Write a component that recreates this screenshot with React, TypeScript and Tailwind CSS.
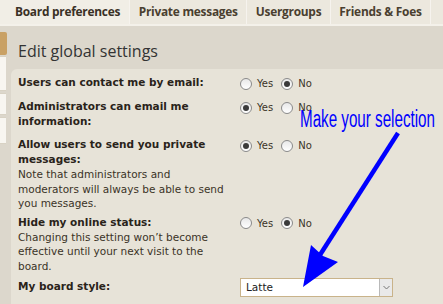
import React from "react";

const tabs = ["Board preferences", "Private messages", "Usergroups", "Friends & Foes"];

function Radio({ checked }: { checked?: boolean }) {
  return (
    <span className="relative inline-flex h-[12px] w-[12px] items-center justify-center rounded-full border border-[#8a8a8a] bg-gradient-to-b from-[#e8e8e8] to-white">
      {checked && <span className="h-[6px] w-[6px] rounded-full bg-[#3a3a3a]" />}
    </span>
  );
}

function YesNo({ yes }: { yes: boolean }) {
  return (
    <div className="flex items-center text-[10px] text-[#3b3327]">
      <Radio checked={yes} />
      <span className="ml-[5px]">Yes</span>
      <span className="ml-[8px]" />
      <Radio checked={!yes} />
      <span className="ml-[5px]">No</span>
    </div>
  );
}

function Row({ label, note, pad = "py-[4px]", children }: { label: React.ReactNode; note?: React.ReactNode; pad?: string; children?: React.ReactNode }) {
  return (
    <div className={`flex ${pad}`}>
      <div className="w-[222px] shrink-0">
        <div className="font-bold leading-[15px] text-[#2a231a]">{label}</div>
        {note && <div className="leading-[14.5px] text-[#3b3327]">{note}</div>}
      </div>
      <div className="pt-[1px]">{children}</div>
    </div>
  );
}

export default function App() {
  return (
    <div className="relative h-[304px] w-[443px] overflow-hidden bg-[#dcd7cc] font-['DejaVu_Sans',sans-serif]">
      {/* tab bar */}
      <div className="flex h-[26px] border-b-2 border-[#f4f1ea] bg-[#ece8de] font-['Open_Sans',sans-serif] text-[11.9px] font-bold tracking-[-0.25px] whitespace-nowrap text-[#4a3f30]">
        {tabs.map((t, i) => (
          <div
            key={t}
            className={`flex shrink-0 items-center border-r border-[#f6f3ee] ${i === 0 ? "bg-[#f1eee6] pl-[15px] pr-[9px] text-[#3a3126]" : "px-[8.5px]"}`}
          >
            {t}
          </div>
        ))}
        <div className="flex-1" />
      </div>

      <div className="flex">
        {/* side nav */}
        <div className="w-[11px] shrink-0 pt-[6px]">
          <div className="h-[23px] w-[7px] rounded-r-[2px] bg-[#c9a165]" />
          <div className="mt-[1px] h-[35px] w-[6px] border-y border-[#d8d2c4] bg-[#f8f6f1]" />
          <div className="mt-[2px] h-[22px] w-[6px] border-y border-[#d8d2c4] bg-[#f8f6f1]" />
          <div className="mt-[2px] h-[27px] w-[6px] border-y border-[#d8d2c4] bg-[#f8f6f1]" />
        </div>

        <div className="flex-1">
          <h2 className="pl-[7px] pt-[13px] font-['Open_Sans',sans-serif] text-[16px] leading-[24px] text-[#333]">
            Edit global settings
          </h2>
          <div className="mt-[6px] h-[300px] rounded-tl-[6px] bg-[#e7e3d8] pl-[7px] pt-[2px] text-[10.5px]">
            <Row label="Users can contact me by email:">
              <YesNo yes={false} />
            </Row>
            <Row label={<>Administrators can email me<br />information:</>}>
              <YesNo yes={true} />
            </Row>
            <Row
              pad="pt-[4px]"
              label={<>Allow users to send you private<br />messages:</>}
              note={<>Note that administrators and<br />moderators will always be able to send<br />you messages.</>}
            >
              <YesNo yes={true} />
            </Row>
            <Row
              pad="pt-[4px] pb-[2px]"
              label="Hide my online status:"
              note={<>Changing this setting won’t become<br />effective until your next visit to the<br />board.</>}
            >
              <YesNo yes={false} />
            </Row>
            <Row label="My board style:">
              <div className="-mt-[2px] flex h-[19px] w-[153px] items-center border border-[#c9b38a] bg-white">
                <span className="flex-1 pl-[5px] text-[10.5px] text-[#222]">Latte</span>
                <span className="flex h-full w-[13px] items-center justify-center border-l border-[#b9b9b9] bg-[#e9e9e9]">
                  <svg width="7" height="5" viewBox="0 0 7 5">
                    <path d="M0.5 1 L3.5 4 L6.5 1" fill="none" stroke="#777" strokeWidth="1" />
                  </svg>
                </span>
              </div>
            </Row>
          </div>
        </div>
      </div>

      {/* annotation */}
      <div className="absolute left-[300px] top-[106px] w-[200px] origin-left scale-x-[0.66] font-['Liberation_Sans',sans-serif] text-[23px] leading-[26px] whitespace-nowrap text-[#0000ff]">
        Make your selection
      </div>
      <svg className="absolute left-0 top-0" width="443" height="304" viewBox="0 0 443 304">
        <line x1="398" y1="133" x2="318" y2="258" stroke="#0000ff" strokeWidth="4.5" />
        <polygon points="311,245 323,256 338,262 303,287" fill="#0000ff" />
      </svg>
    </div>
  );
}
